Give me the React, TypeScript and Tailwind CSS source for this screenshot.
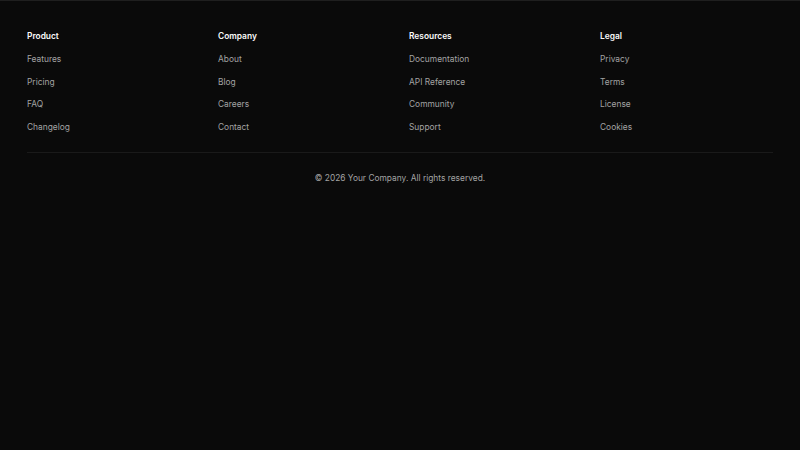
const columns = [
  { title: 'Product', links: ['Features', 'Pricing', 'FAQ', 'Changelog'] },
  { title: 'Company', links: ['About', 'Blog', 'Careers', 'Contact'] },
  { title: 'Resources', links: ['Documentation', 'API Reference', 'Community', 'Support'] },
  { title: 'Legal', links: ['Privacy', 'Terms', 'License', 'Cookies'] },
];

export default function App() {
  return (
    <div
      className="min-h-screen bg-[#0a0a0a]"
      style={{ fontFamily: 'Inter, "Liberation Sans", sans-serif' }}
    >
      <footer className="border-t border-[#1f1f1f] px-[27px] pt-[28px]">
        <div className="grid grid-cols-4 gap-[18px]">
          {columns.map((col) => (
            <div key={col.title}>
              <h3 className="text-[8.4px] leading-[14px] font-semibold text-[#fafafa]">
                {col.title}
              </h3>
              <ul className="mt-[9px] flex flex-col gap-[8.5px]">
                {col.links.map((link) => (
                  <li key={link} className="text-[8.4px] leading-[14px]">
                    <a href="#" className="text-[#a3a3a3]">
                      {link}
                    </a>
                  </li>
                ))}
              </ul>
            </div>
          ))}
        </div>
        <div className="mt-[18px] border-t border-[#1a1a1a] pt-[18px] text-center">
          <p className="text-[8.4px] leading-[14px] text-[#a3a3a3]">
            © 2026 Your Company. All rights reserved.
          </p>
        </div>
      </footer>
    </div>
  );
}
